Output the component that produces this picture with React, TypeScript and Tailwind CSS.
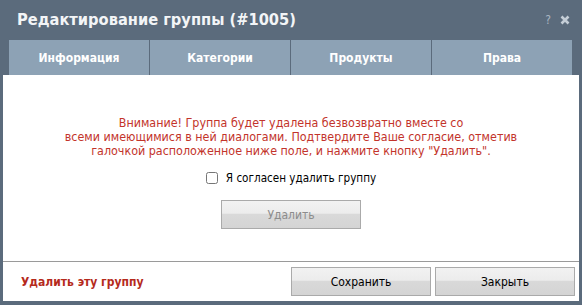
import React, { useState } from 'react';

const tabs = ['Информация', 'Категории', 'Продукты', 'Права'];

const btn =
  'h-[29px] border border-[#aaaaaa] bg-[linear-gradient(to_bottom,#f2f2f2_0%,#ececec_45%,#d9d9d9_50%,#d4d4d4_100%)] text-[12px]';

const App: React.FC = () => {
  const [agree, setAgree] = useState(false);

  return (
    <div className="w-[582px] h-[305px] bg-[#5b6b7c] flex flex-col font-['DejaVu_Sans_Condensed','DejaVu_Sans',sans-serif]">
      {/* Title bar */}
      <div className="h-[40px] flex items-center justify-between pl-[17px] pr-[12px]">
        <h1 className="text-[16.3px] font-bold text-[#f3f5f7] leading-none">Редактирование группы (#1005)</h1>
        <div className="flex items-center gap-[9px] text-[#aab6c2] text-[12px]">
          <span>?</span>
          <svg width="10" height="10" viewBox="0 0 10 10">
            <path d="M1.5 1.5 L8.5 8.5 M8.5 1.5 L1.5 8.5" stroke="#c5ced7" strokeWidth="2.6" />
          </svg>
        </div>
      </div>

      {/* Tabs */}
      <div className="flex gap-px pl-[9px] pr-[10px] h-[35px]">
        {tabs.map((t) => (
          <div key={t} className="flex-1 bg-[#8da2b5] flex items-center justify-center text-white text-[12px] font-bold">
            {t}
          </div>
        ))}
      </div>

      {/* Content */}
      <div className="mx-[3px] mb-[4px] flex-1 bg-white flex flex-col">
        <div className="h-[187px] flex flex-col items-center border-b border-[#9a9a9a]">
          <p className="mt-[41px] text-center text-[12.4px] leading-[14px] text-[#c3342b] whitespace-nowrap">
            Внимание! Группа будет удалена безвозвратно вместе со
            <br />
            всеми имеющимися в ней диалогами. Подтвердите Ваше согласие, отметив
            <br />
            галочкой расположенное ниже поле, и нажмите кнопку "Удалить".
          </p>
          <label className="mt-[13px] flex items-center gap-[8px] text-[11.6px] leading-[14px] text-black">
            <input
              type="checkbox"
              checked={agree}
              onChange={(e) => setAgree(e.target.checked)}
              className="w-[12px] h-[12px] m-0"
            />
            Я согласен удалить группу
          </label>
          <button
            className={`${btn} mt-[15px] w-[140px] text-[#8c8c8c]`}
            disabled={!agree}
          >
            Удалить
          </button>
        </div>
        <div className="flex-1 flex items-center justify-between pl-[18px] pr-[4px]">
          <span className="text-[12px] font-bold text-[#b52a1c]">Удалить эту группу</span>
          <div className="flex gap-[4px]">
            <button className={`${btn} w-[140px] text-black`}>Сохранить</button>
            <button className={`${btn} w-[140px] text-black`}>Закрыть</button>
          </div>
        </div>
      </div>
    </div>
  );
};

export default App;
